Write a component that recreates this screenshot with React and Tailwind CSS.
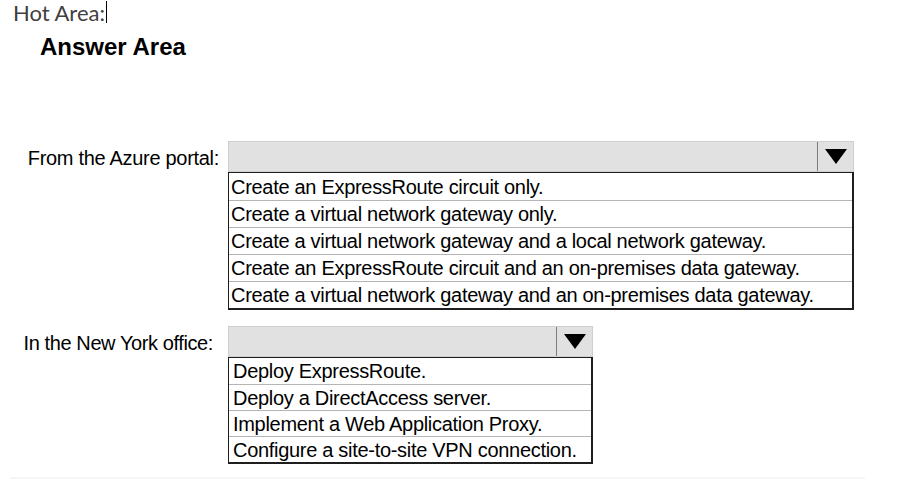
import React from "react";

// Hot Area / Answer Area dropdown question
const portalOptions = [
  "Create an ExpressRoute circuit only.",
  "Create a virtual network gateway only.",
  "Create a virtual network gateway and a local network gateway.",
  "Create an ExpressRoute circuit and an on-premises data gateway.",
  "Create a virtual network gateway and an on-premises data gateway.",
];

const officeOptions = [
  "Deploy ExpressRoute.",
  "Deploy a DirectAccess server.",
  "Implement a Web Application Proxy.",
  "Configure a site-to-site VPN connection.",
];

function Arrow() {
  return (
    <svg width="22" height="15" viewBox="0 0 22 15">
      <polygon points="0,0 22,0 11,15" fill="#000" />
    </svg>
  );
}

function Dropdown({ width, options, rowHeight, padX }) {
  return (
    <div className={`flex flex-col ${width}`}>
      {/* closed select bar */}
      <div className="h-[31px] bg-[#e1e1e1] border border-[#cfcfcf] flex justify-end">
        <div className="w-[36px] border-l border-[#7c7c7c] flex items-center justify-center">
          <Arrow />
        </div>
      </div>
      {/* option list */}
      <div className="border border-[#1e1e1e] border-r-2 border-b-2 bg-white">
        {options.map((opt, i) => (
          <div
            key={opt}
            className={`${rowHeight} ${padX} ${i > 0 ? "border-t border-[#b5b5b5]" : ""} text-[20px] tracking-[-0.3px] text-black whitespace-nowrap flex items-center`}
          >
            {opt}
          </div>
        ))}
      </div>
    </div>
  );
}

export default function App() {
  return (
    <div className="w-[917px] h-[482px] bg-white overflow-hidden font-['Liberation_Sans',Arial,sans-serif]">
      {/* ------------------ Hot Area header ------------------ */}
      <div className="h-[26px] pl-[13px] flex items-start">
        <span className="font-['Lato','Open_Sans',sans-serif] text-[22px] leading-[26px] text-[#404040]">
          Hot Area:
        </span>
        <span className="w-px h-[22px] bg-black ml-[1px] mt-[1px]" />
      </div>

      <h1 className="mt-[7px] pl-[40px] text-[24px] leading-[28px] font-bold text-black">
        Answer Area
      </h1>

      {/* ------------------ From the Azure portal ------------------ */}
      <div className="mt-[80px] flex items-start">
        <div className="w-[228px] h-[31px] pr-[9px] pt-[3px] flex items-center justify-end text-[20px] tracking-[-0.3px] text-black whitespace-nowrap">
          From the Azure portal:
        </div>
        <Dropdown width="w-[626px]" options={portalOptions} rowHeight="h-[27px]" padX="px-[2px]" />
      </div>

      {/* ------------------ In the New York office ------------------ */}
      <div className="mt-[16px] flex items-start">
        <div className="w-[228px] h-[31px] pr-[15px] pt-[3px] flex items-center justify-end text-[20px] tracking-[-0.4px] text-black whitespace-nowrap">
          In the New York office:
        </div>
        <Dropdown width="w-[365px]" options={officeOptions} rowHeight="h-[26px]" padX="px-[4px]" />
      </div>

      <div className="mt-[13px] ml-[10px] w-[855px] h-[2px] bg-[#f5f5f5]" />
    </div>
  );
}
